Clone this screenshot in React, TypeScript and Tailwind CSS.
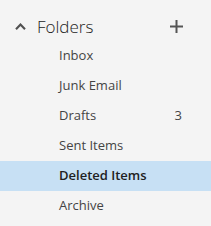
import React from 'react';

const folders = [
  { name: 'Inbox' },
  { name: 'Junk Email' },
  { name: 'Drafts', count: 3 },
  { name: 'Sent Items' },
  { name: 'Deleted Items', selected: true },
  { name: 'Archive' },
];

export default function App() {
  return (
    <div
      className="w-[211px] h-[226px] bg-[#f4f4f4] pt-[11px] overflow-hidden"
      style={{ fontFamily: '"Open Sans", "Noto Sans", sans-serif' }}
    >
      {/* Header */}
      <div className="flex items-center h-[30px] pl-[15px] pr-[28px]">
        <svg width="11" height="7" viewBox="0 0 11 7" className="text-[#505050]">
          <path d="M1 6.2 L5.5 1.5 L10 6.2" fill="none" stroke="currentColor" strokeWidth="2.1" />
        </svg>
        <span className="ml-[11px] text-[17px] font-light text-[#222] leading-none">Folders</span>
        <svg width="13" height="13" viewBox="0 0 13 13" className="ml-auto text-[#555]">
          <path d="M6.5 0 V13 M0 6.5 H13" stroke="currentColor" strokeWidth="2" />
        </svg>
      </div>

      {/* Folder list */}
      <ul>
        {folders.map((f) => (
          <li
            key={f.name}
            className={`flex items-center h-[30px] pl-[59px] pr-[29px] text-[13px] ${
              f.selected ? 'bg-[#c7e0f4] font-semibold text-[#212121]' : 'text-[#444]'
            }`}
          >
            <span>{f.name}</span>
            {f.count !== undefined && <span className="ml-auto">{f.count}</span>}
          </li>
        ))}
      </ul>
    </div>
  );
}
